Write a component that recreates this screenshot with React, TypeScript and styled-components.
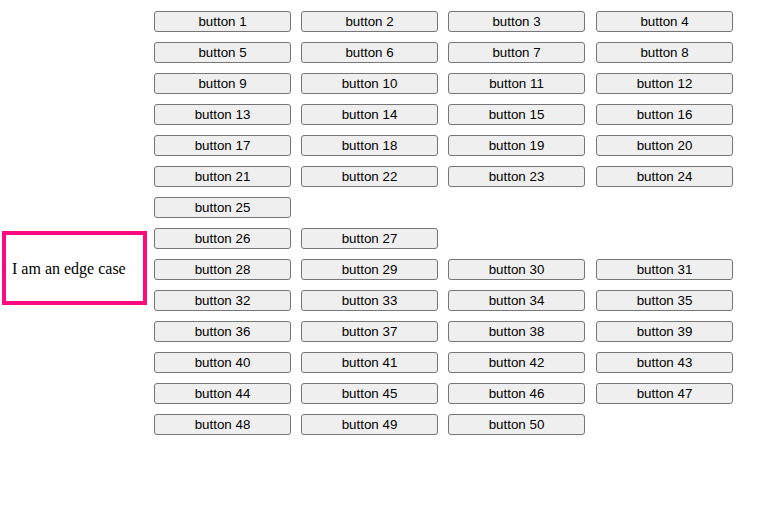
import React from "react";
import styled, { createGlobalStyle } from "styled-components";

const GlobalStyle = createGlobalStyle`
  html, body {
    margin: 0;
    padding: 0;
    background: #ffffff;
  }
  body {
    font-family: "Liberation Serif", "Times New Roman", serif;
    color: #000000;
  }
`;

const Page = styled.div`
  display: flex;
  align-items: flex-start;
  width: 778px;
  height: 532px;
  box-sizing: border-box;
`;

const Aside = styled.div`
  width: 154px;
  flex: none;
  box-sizing: border-box;
  padding: 231px 0 0 2px;
`;

const EdgeCase = styled.div`
  box-sizing: border-box;
  width: 145px;
  height: 74px;
  border: 4px solid #ff0a80;
  padding: 1px 6px 0;
  display: flex;
  align-items: center;
  font-family: "Liberation Serif", "Times New Roman", serif;
  font-size: 16px;
  line-height: 18px;
  color: #000000;
  white-space: nowrap;
`;

const Rows = styled.div`
  display: flex;
  flex-direction: column;
  gap: 10px;
  padding-top: 11px;
`;

const Row = styled.div`
  display: grid;
  grid-template-columns: 137px 137px 138px 137px;
  justify-items: start;
  column-gap: 10px;
`;

const Button = styled.button`
  box-sizing: border-box;
  height: 21px;
  width: 137px;
  margin: 0;
  padding: 0 6px;
  border: 1px solid #767676;
  border-radius: 3px;
  background: #efefef;
  color: #000000;
  font-family: "Liberation Sans", Arial, sans-serif;
  font-size: 13.333px;
  line-height: 19px;
  text-align: center;
  cursor: default;
`;

const rows: number[][] = [
  [1, 2, 3, 4],
  [5, 6, 7, 8],
  [9, 10, 11, 12],
  [13, 14, 15, 16],
  [17, 18, 19, 20],
  [21, 22, 23, 24],
  [25],
  [26, 27],
  [28, 29, 30, 31],
  [32, 33, 34, 35],
  [36, 37, 38, 39],
  [40, 41, 42, 43],
  [44, 45, 46, 47],
  [48, 49, 50],
];

export default function App() {
  return (
    <>
      <GlobalStyle />
      <Page>
        <Aside>
          <EdgeCase>I am an edge case</EdgeCase>
        </Aside>
        <Rows>
          {rows.map((r, i) => (
            <Row key={i}>
              {r.map((n) => (
                <Button key={n} type="button">
                  button {n}
                </Button>
              ))}
            </Row>
          ))}
        </Rows>
      </Page>
    </>
  );
}
